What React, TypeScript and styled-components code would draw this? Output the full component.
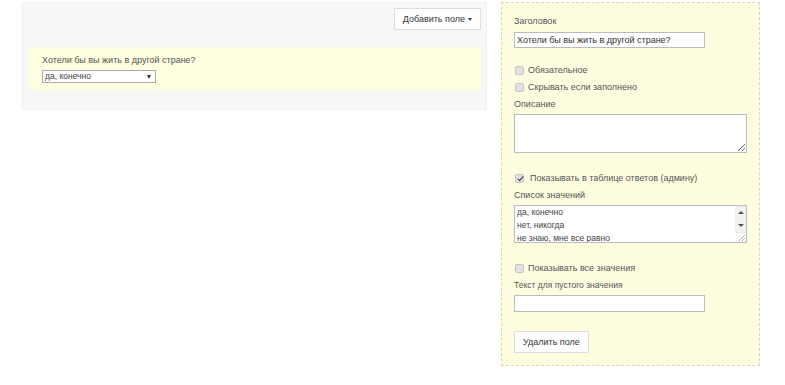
import React from "react";
import styled, { createGlobalStyle } from "styled-components";

const Global = createGlobalStyle`
  html, body { margin: 0; padding: 0; background: #fff; }
  body { font-family: "Liberation Sans", Arial, sans-serif; font-size: 9px; color: #555; }
  * { box-sizing: border-box; }
`;

const Page = styled.div`
  display: flex;
  align-items: flex-start;
  gap: 14px;
  padding: 2px 0 0 22px;
`;

const Canvas = styled.div`
  width: 465px;
  height: 108px;
  background: #f7f7f7;
  border: 1px solid #f0f0f0;
  padding: 5px 5px 0 6px;
  display: flex;
  flex-direction: column;
`;

const Toolbar = styled.div`
  display: flex;
  justify-content: flex-end;
`;

const Button = styled.button`
  height: 22px;
  padding: 0 8px;
  background: #fff;
  border: 1px solid #ddd;
  border-radius: 1px;
  font-family: inherit;
  font-size: 9px;
  color: #333;
  display: inline-flex;
  align-items: center;
  gap: 3px;
  cursor: pointer;
`;

const Caret = styled.span`
  width: 0;
  height: 0;
  border-left: 2.5px solid transparent;
  border-right: 2.5px solid transparent;
  border-top: 3px solid #444;
`;

const FieldPreview = styled.div`
  margin-top: 17px;
  height: 43px;
  background: #fefee0;
  padding: 8px 13px 0;
  display: flex;
  flex-direction: column;
  gap: 4px;
`;

const Question = styled.div`
  line-height: 11px;
  color: #555;
`;

const FakeSelect = styled.div`
  width: 114px;
  height: 13px;
  background: #fff;
  border: 1px solid #aaa;
  font-size: 8.5px;
  line-height: 11px;
  color: #444;
  padding: 0 4px 0 2px;
  display: flex;
  justify-content: space-between;
  align-items: center;
`;

const SelArrow = styled.span`
  width: 0;
  height: 0;
  border-left: 2.5px solid transparent;
  border-right: 2.5px solid transparent;
  border-top: 4px solid #333;
`;

const Editor = styled.div`
  width: 259px;
  height: 364px;
  background: #fffde0;
  border: 1px dashed #d6d6c4;
  padding: 12px 12px 0 12px;
  display: flex;
  flex-direction: column;
`;

const Label = styled.div<{ $mt?: number; $small?: boolean }>`
  margin-top: ${(p) => p.$mt ?? 0}px;
  height: 12px;
  line-height: 12px;
  font-size: ${(p) => (p.$small ? 8.5 : 9)}px;
  color: #555;
`;

const TextInput = styled.input<{ $mt?: number; $h?: number }>`
  margin: ${(p) => p.$mt ?? 0}px 0 0 0;
  width: 191px;
  height: ${(p) => p.$h ?? 16}px;
  border: 1px solid #bbb;
  background: #fff;
  font-family: inherit;
  font-size: 9px;
  color: #333;
  padding: 0 2px;
  outline: none;
`;

const Area = styled.textarea<{ $mt?: number; $h: number }>`
  display: block;
  margin: ${(p) => p.$mt ?? 0}px 0 0 0;
  width: 233px;
  height: ${(p) => p.$h}px;
  border: 1px solid #bbb;
  background: #fff;
  font-family: inherit;
  font-size: 8.5px;
  line-height: 13px;
  color: #444;
  padding: 0 2px;
  outline: none;
  resize: both;
  overflow: hidden;
`;

const ListBox = styled.div`
  margin-top: 4px;
  width: 233px;
  height: 38px;
  border: 1px solid #bbb;
  background: #fff;
  display: flex;
`;

const ListArea = styled.textarea`
  flex: 1;
  min-width: 0;
  height: 100%;
  border: none;
  background: #fff;
  font-family: inherit;
  font-size: 8.5px;
  line-height: 13px;
  color: #444;
  padding: 0 2px;
  outline: none;
  resize: none;
  overflow: hidden;
`;

const ScrollCol = styled.div`
  width: 11px;
  display: flex;
  flex-direction: column;
  background: #f1f1f1;
`;

const ScrollBtn = styled.div<{ $down?: boolean }>`
  height: 13px;
  display: flex;
  align-items: center;
  justify-content: center;
  &::before {
    content: "";
    width: 0;
    height: 0;
    border-left: 3px solid transparent;
    border-right: 3px solid transparent;
    ${(p) =>
      p.$down ? "border-top: 3px solid #505050;" : "border-bottom: 3px solid #505050;"}
  }
`;

const Corner = styled.div`
  flex: 1;
  background: #fff;
  border-top: 1px solid #e4e4e4;
  display: flex;
  align-items: flex-end;
  justify-content: flex-end;
  padding: 0 1px 1px 0;
`;

const CheckRow = styled.label<{ $mt?: number; $gap?: number }>`
  margin-top: ${(p) => p.$mt ?? 0}px;
  height: 12px;
  display: flex;
  align-items: center;
  gap: ${(p) => p.$gap ?? 4}px;
  font-size: 9px;
  color: #555;
`;

const Check = styled.input`
  appearance: none;
  margin: 0 0 0 1px;
  width: 9px;
  height: 9px;
  border: 1px solid #c4c4c4;
  border-radius: 2px;
  background: #e2e2e2;
  position: relative;
  flex: none;

  &:checked::after {
    content: "";
    position: absolute;
    left: 2.5px;
    top: 0px;
    width: 2px;
    height: 5px;
    border: solid #333;
    border-width: 0 1.5px 1.5px 0;
    transform: rotate(40deg);
  }
`;

const DeleteRow = styled.div`
  margin-top: 19px;
`;

const Grip = () => (
  <svg width="7" height="7" viewBox="0 0 7 7">
    <path d="M7 1 L1 7 M7 4 L4 7" stroke="#999" strokeWidth="0.8" fill="none" />
  </svg>
);

export default function App() {
  return (
    <>
      <Global />
      <Page>
        <Canvas>
          <Toolbar>
            <Button>
              Добавить поле <Caret />
            </Button>
          </Toolbar>
          <FieldPreview>
            <Question>Хотели бы вы жить в другой стране?</Question>
            <FakeSelect>
              <span>да, конечно</span>
              <SelArrow />
            </FakeSelect>
          </FieldPreview>
        </Canvas>
        <Editor>
          <Label>Заголовок</Label>
          <TextInput $mt={5} defaultValue="Хотели бы вы жить в другой стране?" />
          <CheckRow $mt={16}>
            <Check type="checkbox" />
            Обязательное
          </CheckRow>
          <CheckRow $mt={5}>
            <Check type="checkbox" />
            Скрывать если заполнено
          </CheckRow>
          <Label $mt={5}>Описание</Label>
          <Area $mt={4} $h={39} defaultValue="" />
          <CheckRow $mt={19} $gap={6}>
            <Check type="checkbox" defaultChecked />
            Показывать в таблице ответов (админу)
          </CheckRow>
          <Label $mt={5}>Список значений</Label>
          <ListBox>
            <ListArea
              defaultValue={"да, конечно\nнет, никогда\nне знаю, мне все равно"}
            />
            <ScrollCol>
              <ScrollBtn />
              <ScrollBtn $down />
              <Corner>
                <Grip />
              </Corner>
            </ScrollCol>
          </ListBox>
          <CheckRow $mt={19}>
            <Check type="checkbox" />
            Показывать все значения
          </CheckRow>
          <Label $mt={5} $small>
            Текст для пустого значения
          </Label>
          <TextInput $mt={4} $h={17} defaultValue="" />
          <DeleteRow>
            <Button>Удалить поле</Button>
          </DeleteRow>
        </Editor>
      </Page>
    </>
  );
}
